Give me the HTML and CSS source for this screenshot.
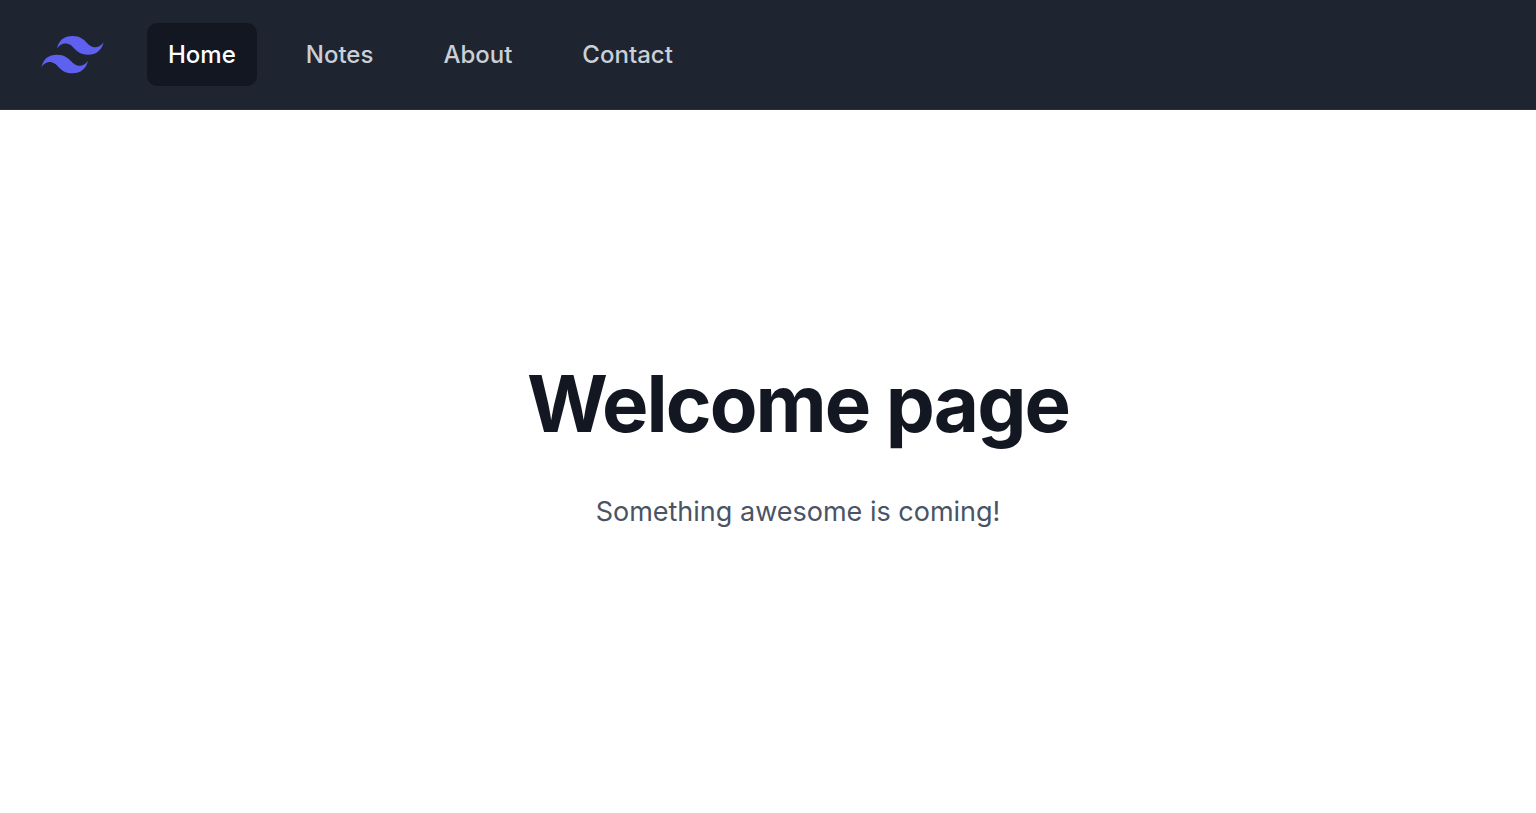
FILE: index.html
```html
<!DOCTYPE html>
<html lang="en">
<head>
  <meta charset="UTF-8">
  <meta name="viewport" content="width=device-width, initial-scale=1.0">
  <title>Welcome page</title>
  <link rel="stylesheet" href="styles.css">
</head>
<body>
  <!-- Navigation -->
  <nav class="navbar">
    <svg class="logo" viewBox="0 0 54 33" aria-hidden="true">
      <path fill="#5e60ef" fill-rule="evenodd" clip-rule="evenodd" d="M27 0c-7.2 0-11.7 3.6-13.5 10.8 2.7-3.6 5.85-4.95 9.45-4.05 2.054.513 3.522 2.004 5.147 3.653C30.744 13.09 33.808 16.2 40.5 16.2c7.2 0 11.7-3.6 13.5-10.8-2.7 3.6-5.85 4.95-9.45 4.05-2.054-.513-3.522-2.004-5.147-3.653C36.756 3.11 33.692 0 27 0zM13.5 16.2C6.3 16.2 1.8 19.8 0 27c2.7-3.6 5.85-4.95 9.45-4.05 2.054.514 3.522 2.004 5.147 3.653C17.244 29.29 20.308 32.4 27 32.4c7.2 0 11.7-3.6 13.5-10.8-2.7 3.6-5.85 4.95-9.45 4.05-2.054-.513-3.522-2.004-5.147-3.653C23.256 19.31 20.192 16.2 13.5 16.2z"/>
    </svg>
    <div class="nav-links">
      <a href="#" class="nav-link active" aria-current="page">Home</a>
      <a href="#" class="nav-link">Notes</a>
      <a href="#" class="nav-link">About</a>
      <a href="#" class="nav-link">Contact</a>
    </div>
  </nav>

  <!-- Welcome message -->
  <main class="welcome">
    <h1>Welcome page</h1>
    <p>Something awesome is coming!</p>
  </main>
</body>
</html>
```
FILE: styles.css
```css
/* General Styles */
* {
  box-sizing: border-box;
}

body {
  font-family: Inter, 'Liberation Sans', sans-serif;
  margin: 0;
  background: #fff;
}

/* Navigation */
.navbar {
  display: flex;
  align-items: center;
  gap: 43px;
  padding: 23px 41px 23px;
  background: #1f2530;
  border-bottom: 1px solid #2b3040;
}

.logo {
  width: 63px;
  height: 38px;
}

.nav-links {
  display: flex;
  gap: 28px;
}

.nav-link {
  padding: 14px 21px;
  border-radius: 10px;
  font-size: 24px;
  line-height: 35px;
  font-weight: 500;
  color: #cbcfd6;
  text-decoration: none;
}

.nav-link.active {
  background: #121722;
  color: #fff;
}

/* Welcome message */
.welcome {
  padding: 252px 0 252px 60px;
  text-align: center;
}

h1 {
  margin: 0;
  font-size: 78px;
  line-height: 84px;
  font-weight: 700;
  letter-spacing: -0.025em;
  color: #121722;
}

p {
  margin: 42px 0 0;
  font-size: 27px;
  line-height: 48px;
  color: #4a5464;
}
```
